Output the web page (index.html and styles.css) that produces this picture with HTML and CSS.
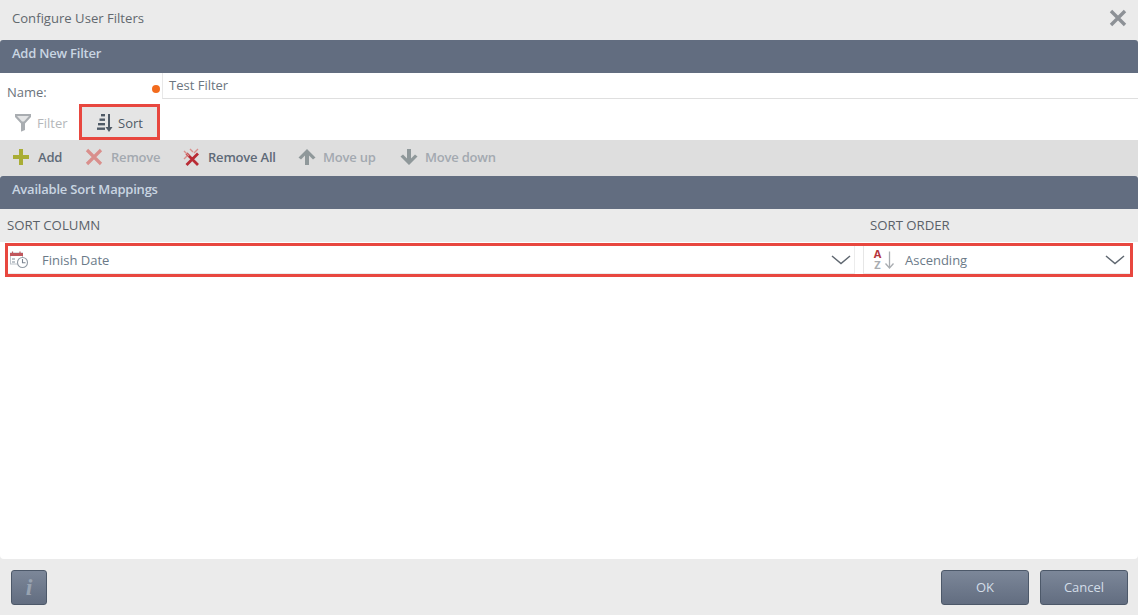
FILE: index.html
```html
<!DOCTYPE html>
<html lang="en">
<head>
<meta charset="utf-8">
<title>Configure User Filters</title>
<link rel="stylesheet" href="styles.css">
</head>
<body>
<div class="dialog">
  <div class="titlebar">
    <span class="title">Configure User Filters</span>
    <svg class="close" width="18" height="18" viewBox="0 0 18 18"><path d="M2 2 L16 16 M16 2 L2 16" stroke="#8d9196" stroke-width="3.4" fill="none"/></svg>
  </div>
  <div class="band">Add New Filter</div>
  <div class="name-row">
    <label class="name-label">Name:</label>
    <span class="required"></span>
    <div class="name-input">Test Filter</div>
  </div>
  <div class="tabs">
    <div class="tab tab-off">
      <svg width="18" height="19" viewBox="0 0 18 19"><path d="M1 1 H17 V4 L11 10.500 V17 L7.500 18.500 H7 V10.500 L1 4 Z" fill="#a9adb1"/><path d="M3 3 H15 L10 8.500 H8 Z" fill="#e4e5e6"/></svg>
      <span>Filter</span>
    </div>
    <div class="tab tab-on">
      <svg width="19" height="20" viewBox="0 0 19 20"><g fill="#4f5a66"><rect x="5" y="1" width="4" height="2.400"/><rect x="3.500" y="5.500" width="5.500" height="2.400"/><rect x="2" y="10" width="7" height="2.400"/><rect x="1" y="14.500" width="8" height="2.400"/><rect x="12" y="1" width="2" height="14"/><path d="M9.500 14 H16.500 L13 19 Z"/></g></svg>
      <span>Sort</span>
    </div>
  </div>
  <div class="toolbar">
    <div class="tool tool-add">
      <svg width="18" height="18" viewBox="0 0 18 18"><path d="M7 1 H11 V7 H17 V11 H11 V17 H7 V11 H1 V7 H7 Z" fill="#a9ad35"/></svg>
      <span>Add</span>
    </div>
    <div class="tool tool-remove tool-dim">
      <svg width="18" height="18" viewBox="0 0 18 18"><path d="M2 2 L16 16 M16 2 L2 16" stroke="#d98f8c" stroke-width="3.200" fill="none"/></svg>
      <span>Remove</span>
    </div>
    <div class="tool tool-removeall">
      <svg width="18" height="18" viewBox="0 0 18 18"><path d="M3.500 5.500 L15 17 M15 5.500 L3.500 17" stroke="#b92c35" stroke-width="2.800" fill="none"/><path d="M1 3 L6 8 M7 1 L10 4 M15 1 L11 5 M1 11 L4 8" stroke="#d98f8c" stroke-width="1.400" fill="none"/></svg>
      <span>Remove All</span>
    </div>
    <div class="tool tool-up tool-dim">
      <svg width="18" height="18" viewBox="0 0 18 18"><path d="M9 1 L17.500 9.500 L15 11.500 L11 7.500 V17 H7 V7.500 L3 11.500 L0.500 9.500 Z" fill="#8f989a"/></svg>
      <span>Move up</span>
    </div>
    <div class="tool tool-down tool-dim">
      <svg width="18" height="18" viewBox="0 0 18 18"><path d="M9 17 L17.500 8.500 L15 6.500 L11 10.500 V1 H7 V10.500 L3 6.500 L0.500 8.500 Z" fill="#8f989a"/></svg>
      <span>Move down</span>
    </div>
  </div>
  <div class="band">Available Sort Mappings</div>
  <div class="col-heads">
    <div class="col-first">SORT COLUMN</div>
    <div class="col-second">SORT ORDER</div>
  </div>
  <div class="body">
    <div class="row">
      <div class="cell cell-first">
        <svg class="cell-icon" width="20" height="18" viewBox="0 0 20 18"><rect x="1.500" y="2" width="12" height="11" fill="#fff" stroke="#bcc3ca"/><rect x="1" y="2" width="13" height="3" fill="#c0565c"/><path d="M3.500 0.500 V3 M11 0.500 V3" stroke="#c0565c" stroke-width="1.200"/><path d="M3 8 H6 M3 11 H6" stroke="#aab2ba" stroke-width="1.500"/><circle cx="13.500" cy="11.500" r="5" fill="#fff" stroke="#929ba5" stroke-width="1.100"/><path d="M13.500 8 V11.800 H16.500" stroke="#7b8591" stroke-width="1.100" fill="none"/></svg>
        <span class="cell-text">Finish Date</span>
        <svg class="chevron" width="20" height="10" viewBox="0 0 20 10"><path d="M1 1 L10 8.500 L19 1" stroke="#5f6770" stroke-width="1.500" fill="none"/></svg>
      </div>
      <div class="cell cell-second">
        <div class="az">
          <span class="az-a">A</span>
          <span class="az-z">Z</span>
        </div>
        <svg class="az-arrow" width="9" height="18" viewBox="0 0 9 18"><path d="M4.500 0.500 V17 M0.500 12.500 L4.500 17 L8.500 12.500" stroke="#a9adb1" stroke-width="1.300" fill="none"/></svg>
        <span class="cell-text">Ascending</span>
        <svg class="chevron" width="20" height="10" viewBox="0 0 20 10"><path d="M1 1 L10 8.500 L19 1" stroke="#5f6770" stroke-width="1.500" fill="none"/></svg>
      </div>
    </div>
  </div>
  <div class="footer">
    <button class="btn btn-info"><span class="info-i">i</span></button>
    <div class="footer-right">
      <button class="btn btn-ok">OK</button>
      <button class="btn btn-cancel">Cancel</button>
    </div>
  </div>
</div>
</body>
</html>
```
FILE: styles.css
```css
* { box-sizing: border-box; }
html, body { margin: 0; padding: 0; }
body {
  width: 1138px;
  height: 615px;
  overflow: hidden;
  font-family: "Open Sans", "Noto Sans", sans-serif;
  font-size: 13px;
  color: #5d6670;
}
.dialog { display: flex; flex-direction: column; height: 615px; background: #ebebeb; }
.titlebar { height: 40px; display: flex; align-items: center; justify-content: space-between; padding: 0 11px 4px 12px; }
.title { font-size: 13.100px; color: #62686e; }
.band {
  height: 33px;
  padding: 4px 0 0 12px;
  background: #626d80;
  color: #c9d5e2;
  font-size: 13px;
  font-weight: 600;
  letter-spacing: -0.220px;
  border-radius: 3px 3px 0 0;
  flex: none;
}
.name-row { height: 26px; background: #fff; display: flex; flex: none; }
.name-label { width: 152px; padding: 10px 0 0 7px; font-size: 13px; color: #6b737b; white-space: nowrap; }
.required { width: 8px; height: 8px; margin: 12px 2px 0 0; border-radius: 50%; background: #f26b1d; flex: none; }
.name-input { flex: 1; padding: 3px 0 0 6px; border-left: 1px solid #e8e8e8; border-bottom: 1px solid #dfdfdf; color: #6b7680; font-size: 13px; }
.tabs { height: 41px; background: #fff; display: flex; align-items: flex-end; padding-left: 5px; flex: none; }
.tab { height: 36px; display: flex; align-items: center; font-size: 13px; padding-top: 1px; }
.tab-off { width: 74px; color: #b4b7ba; padding-left: 9px; gap: 5px; }
.tab-on { width: 81px; color: #4f5a66; background: #e5e5e5; border: 3px solid #e8473f; padding-left: 14px; gap: 3px; }
.toolbar { height: 36px; background: #dedede; display: flex; align-items: center; padding: 0 0 2px 12px; flex: none; }
.tool { display: flex; align-items: center; gap: 7px; font-size: 13px; font-weight: 600; letter-spacing: -0.200px; color: #5e6a78; }
.tool-dim span { color: #a3a9b0; }
.tool-add { width: 73px; gap: 8px; }
.tool-remove { width: 98px; gap: 8px; }
.tool-removeall { width: 115px; }
.tool-up { width: 102px; }
.col-heads { height: 33px; display: flex; font-size: 13.200px; color: #5a6168; padding-top: 7px; flex: none; }
.col-first { width: 870px; padding-left: 7px; }
.col-second { flex: 1; }
.body { flex: 1; background: #fff; border-radius: 0 0 4px 4px; padding: 1px 5px 0 5px; }
.row { height: 34px; border: 3px solid #e8473f; display: flex; background: #fff; }
.cell { display: flex; align-items: center; border-bottom: 1px solid #ececec; }
.cell-first { width: 847px; padding-left: 1px; border-right: 1px solid #ececec; }
.cell-second { flex: 1; margin-left: 8px; padding-left: 8px; border-left: 1px solid #e6e6e6; }
.cell-text { font-size: 13px; color: #6b7a88; }
.cell-first .cell-text { margin-left: 13px; }
.cell-second .cell-text { margin-left: 11px; }
.chevron { margin-left: auto; margin-right: 3px; }
.cell-second .chevron { margin-right: 5px; }
.az { display: flex; flex-direction: column; width: 11px; font-size: 11px; font-weight: 700; line-height: 10.500px; text-align: center; }
.az-a { color: #b5343c; }
.az-z { color: #a9adb1; }
.az-arrow { margin-left: 2px; }
.footer { height: 56px; flex: none; display: flex; justify-content: space-between; align-items: flex-start; padding: 11px 10px 0 11px; }
.footer-right { display: flex; gap: 11px; }
.btn {
  height: 35px;
  border: 1px solid #4c5869;
  border-radius: 3px;
  background: linear-gradient(#7c8799, #626d80);
  color: #d3dde8;
  font-family: "Open Sans", sans-serif;
  font-size: 13px;
  padding: 0 0 2px;
}
.btn-info { width: 36px; }
.btn-ok { width: 88px; }
.btn-cancel { width: 88px; }
.info-i { font-family: "Liberation Serif", serif; font-style: italic; font-weight: 700; font-size: 24px; color: #98a3b1; line-height: 1; }
```
